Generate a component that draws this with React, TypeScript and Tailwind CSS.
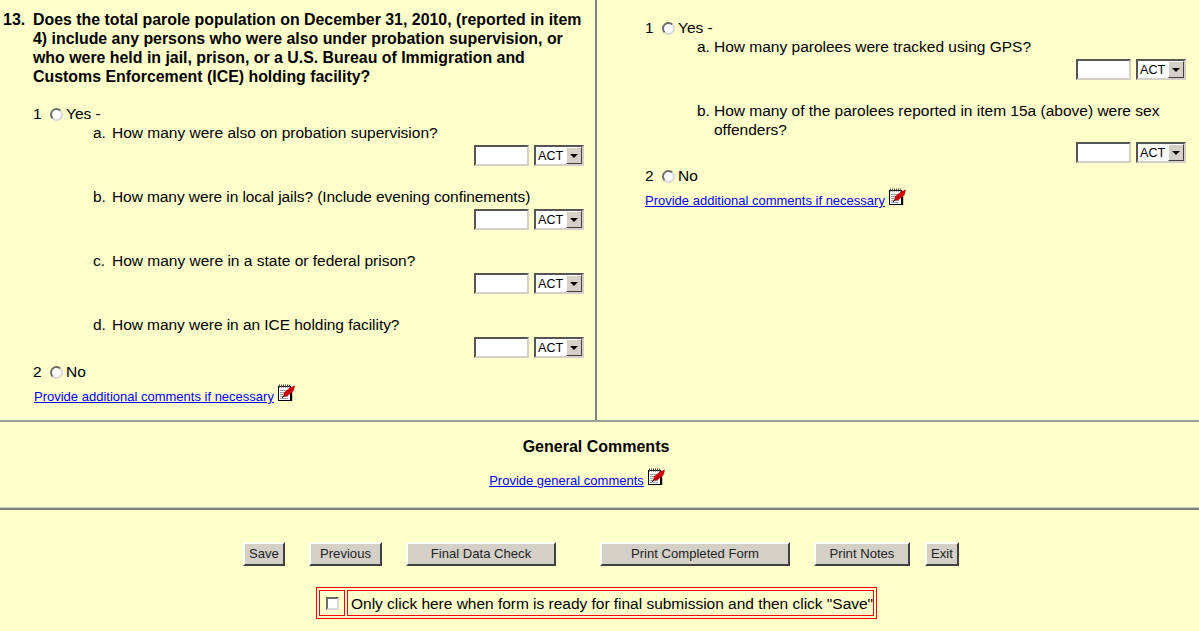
const FONT = "font-['Liberation_Sans',Arial,sans-serif]"

function Radio() {
  return (
    <span className="inline-block w-[13px] h-[13px] rounded-full bg-white border-2 border-t-[#6b6b6b] border-l-[#6b6b6b] border-r-[#d8d8d8] border-b-[#d8d8d8]" />
  )
}

// notepad with the red quill
function NoteIcon() {
  return (
    <svg width="17" height="17" viewBox="0 0 17 17" className="block">
      <rect x="0.5" y="2.5" width="12" height="14" fill="#fff" stroke="#000" />
      <path d="M13.5 4v13H2" fill="none" stroke="#000" strokeWidth="1.4" />
      <path d="M1.5 0.5v3M3.5 0.5v3M5.5 0.5v3M7.5 0.5v3M9.5 0.5v3M11.5 0.5v3" stroke="#444" />
      <path d="M2 6.5h7M2 8.5h5M2 10.5h3M2 12.5h8M2 14.5h8" stroke="#a0a0a0" />
      <path d="M5 13l1-4.5 6-5 5-2-1.5 5.5-6 5z" fill="#cc0000" />
      <path d="M4 14l2-2.5" stroke="#000" />
    </svg>
  )
}

function CommentLink({ text, className = "" }: { text: string; className?: string }) {
  return (
    <div className={`flex items-start ${className}`}>
      <a href="#" className="text-[13px] leading-[18px] mt-[1px] text-[#0000ff] underline">
        {text}
      </a>
      <span className="ml-1 -mt-[3px]">
        <NoteIcon />
      </span>
    </div>
  )
}

function ActInputs() {
  return (
    <div className="flex justify-end gap-[5px] h-[21px]">
      <input
        type="text"
        className="w-[55px] h-[21px] bg-white border-2 border-t-[#555] border-l-[#555] border-r-[#d4d0c8] border-b-[#d4d0c8] outline-none"
      />
      <div className="flex w-[50px] h-[21px] bg-white border-2 border-t-[#555] border-l-[#555] border-r-[#d4d0c8] border-b-[#d4d0c8]">
        <span className="flex-1 pl-[2px] text-[12.6px] leading-[19px] text-black">ACT</span>
        <span className="flex items-center justify-center w-[16px] bg-[#d4d0c8] border border-t-white border-l-white border-r-[#404040] border-b-[#404040]">
          <span className="w-0 h-0 border-x-[4px] border-x-transparent border-t-[4px] border-t-black" />
        </span>
      </div>
    </div>
  )
}

function SubQuestion({
  letter,
  children,
  first,
  narrow,
}: {
  letter: string
  children: React.ReactNode
  first?: boolean
  narrow?: boolean
}) {
  return (
    <div className={first ? "" : "mt-[22px]"}>
      <div className="flex -mt-px">
        <span className={narrow ? "w-[17px] shrink-0" : "w-[19px] shrink-0"}>{letter}</span>
        <span>{children}</span>
      </div>
      <div className="mt-[3px]">
        <ActInputs />
      </div>
    </div>
  )
}

function Choice({ n, label }: { n: string; label: string }) {
  return (
    <div className="flex items-center h-[19px]">
      <span className="w-[17px] -mt-px mb-px">{n}</span>
      <Radio />
      <span className="ml-[3px] -mt-px mb-px">{label}</span>
    </div>
  )
}

function ActionButton({ label, className }: { label: string; className: string }) {
  return (
    <button className={`h-[24px] bg-[#d4d0c8] border-2 border-t-white border-l-white border-r-[#404040] border-b-[#404040] text-[13.1px] leading-none text-[#222] ${className}`}>
      {label}
    </button>
  )
}

export default function App() {
  return (
    <div className={`${FONT} w-[1199px] h-[631px] overflow-hidden bg-[#ffffcc] text-black text-[15.5px] leading-[19px]`}>
      <div className="flex h-[420px]">
        {/* Item 13 */}
        <div className="w-[597px] shrink-0 pt-[10px] pl-[3px] pr-[11px] border-r-2 border-[#808080]">
          <div className="flex font-bold">
            <span className="w-[30px] shrink-0 text-[16px]">13.</span>
            <span className="w-[551px] text-[15.9px]">
              Does the total parole population on December 31, 2010, (reported in item 4) include any persons who were
              also under probation supervision, or who were held in jail, prison, or a U.S. Bureau of Immigration and
              Customs Enforcement (ICE) holding facility?
            </span>
          </div>
          <div className="mt-[19px] pl-[30px]">
            <Choice n="1" label="Yes -" />
            <div className="pl-[60px]">
              <SubQuestion letter="a." first>How many were also on probation supervision?</SubQuestion>
              <SubQuestion letter="b."><span className="tracking-[-0.08px]">How many were in local jails? (Include evening confinements)</span></SubQuestion>
              <SubQuestion letter="c.">How many were in a state or federal prison?</SubQuestion>
              <SubQuestion letter="d."><span className="tracking-[-0.05px]">How many were in an ICE holding facility?</span></SubQuestion>
            </div>
            <div className="mt-[5px]">
              <Choice n="2" label="No" />
            </div>
            <div className="mt-[5px]">
              <CommentLink text="Provide additional comments if necessary" className="ml-px" />
            </div>
          </div>
        </div>

        {/* Item 15 */}
        <div className="flex-1 pt-[19px] pl-[48px] pr-[13px]">
          <Choice n="1" label="Yes -" />
          <div className="pl-[52px]">
            <SubQuestion letter="a." first narrow>How many parolees were tracked using GPS?</SubQuestion>
            <SubQuestion letter="b." narrow>How many of the parolees reported in item 15a (above) were sex offenders?</SubQuestion>
          </div>
          <div className="mt-[4px]">
            <Choice n="2" label="No" />
          </div>
          <div className="mt-[5px]">
            <CommentLink text="Provide additional comments if necessary" />
          </div>
        </div>
      </div>

      <div className="border-t-2 border-[#a0a09a] h-[87px] pt-[15px] pr-[7px] flex flex-col items-center">
        <div className="font-bold text-[16px]">General Comments</div>
        <div className="mt-[15px] mr-[38px]">
          <CommentLink text="Provide general comments" />
        </div>
      </div>

      <div className="border-t border-[#d0d0c0]" />
      <div className="border-t-2 border-[#808078]" />

      <div className="flex mt-[32px] pl-[243px]">
        <ActionButton label="Save" className="w-[42px]" />
        <ActionButton label="Previous" className="w-[73px] ml-[24px]" />
        <ActionButton label="Final Data Check" className="w-[150px] ml-[24px]" />
        <ActionButton label="Print Completed Form" className="w-[190px] ml-[44px]" />
        <ActionButton label="Print Notes" className="w-[96px] ml-[24px]" />
        <ActionButton label="Exit" className="w-[34px] ml-[15px]" />
      </div>

      <div className="flex justify-center mt-[21px] pr-[6px]">
        <div className="flex gap-[2px] p-[2px] border border-[#ff0000]">
          <div className="flex items-center justify-center w-[26px] h-[26px] border border-[#ff0000]">
            <span className="w-[13px] h-[13px] bg-white border-2 border-t-[#6b6b6b] border-l-[#6b6b6b] border-r-[#d8d8d8] border-b-[#d8d8d8]" />
          </div>
          <div className="flex items-center w-[527px] h-[26px] pl-[3px] border border-[#ff0000] whitespace-nowrap">
            <span className="tracking-[-0.02px]">Only click here when form is ready for final submission and then click "Save"</span>
          </div>
        </div>
      </div>
    </div>
  )
}
